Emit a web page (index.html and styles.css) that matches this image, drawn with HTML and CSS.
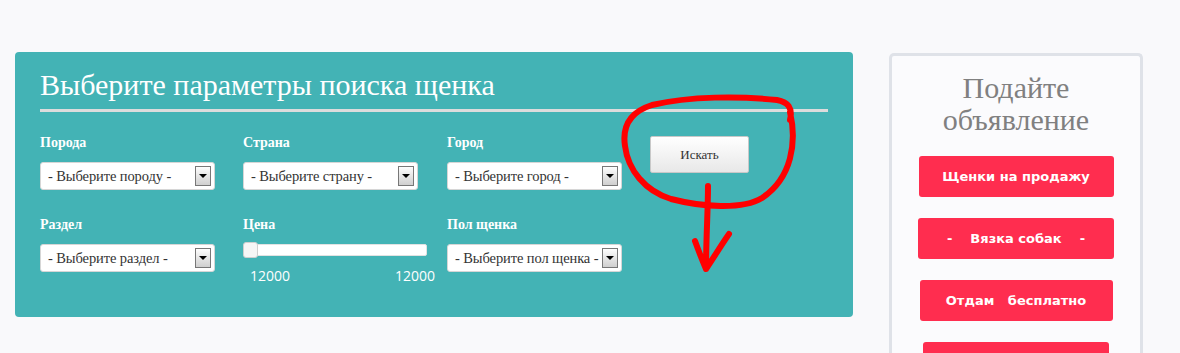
FILE: index.html
```html
<!DOCTYPE html>
<html lang="ru">
<head>
  <meta charset="UTF-8">
  <meta name="viewport" content="width=device-width, initial-scale=1.0">
  <title>Поиск щенка</title>
  <link rel="stylesheet" href="styles.css">
</head>
<body>

<div class="page">
  <div class="search-panel">
    <h1 class="search-title">Выберите параметры поиска щенка</h1>

    <div class="search-grid">
      <div class="field">
        <label>Порода</label>
        <div class="select"><span class="select-text">- Выберите породу -</span><span class="select-arrow"></span></div>
      </div>
      <div class="field">
        <label>Страна</label>
        <div class="select"><span class="select-text">- Выберите страну -</span><span class="select-arrow"></span></div>
      </div>
      <div class="field">
        <label>Город</label>
        <div class="select"><span class="select-text">- Выберите город -</span><span class="select-arrow"></span></div>
      </div>
      <div class="field">
        <button class="search-btn">Искать</button>
      </div>

      <div class="field">
        <label>Раздел</label>
        <div class="select"><span class="select-text">- Выберите раздел -</span><span class="select-arrow"></span></div>
      </div>
      <div class="field">
        <label>Цена</label>
        <div class="slider">
          <div class="slider-track"><div class="slider-handle"></div></div>
          <div class="slider-values"><span>12000</span><span>12000</span></div>
        </div>
      </div>
      <div class="field">
        <label>Пол щенка</label>
        <div class="select"><span class="select-text">- Выберите пол щенка -</span><span class="select-arrow"></span></div>
      </div>
    </div>
  </div>

  <aside class="sidebar">
    <h2 class="sidebar-title">Подайте объявление</h2>
    <div class="sidebar-links">
      <a class="ad-btn ad-sale" href="#">Щенки на продажу</a>
      <a class="ad-btn ad-mating" href="#">-    Вязка собак    -</a>
      <a class="ad-btn ad-free" href="#">Отдам   бесплатно</a>
      <a class="ad-btn ad-more" href="#"></a>
    </div>
  </aside>
</div>

<!-- hand-drawn marker over the search button -->
<svg class="scribble" width="1180" height="353" viewBox="0 0 1180 353">
  <path d="M790 112 C797 142 792 178 762 198 C742 210 702 207 671 199 C645 191 628 170 625 146 C622 126 630 112 652 105 C690 96 740 96 777 100 C788 102 793 108 790 120"
        fill="none" stroke="#ff0000" stroke-width="6" stroke-linecap="round" stroke-linejoin="round"/>
  <path d="M708 186 C708 210 706 240 706 269 M695 241 C699 252 703 262 706 269 C714 257 722 244 729 234"
        fill="none" stroke="#ff0000" stroke-width="6" stroke-linecap="round" stroke-linejoin="round"/>
</svg>

</body>
</html>
```

FILE: styles.css
```css
body {
  margin: 0;
  background: #f9f9fb;
  font-family: "Liberation Serif", "Times New Roman", serif;
  overflow: hidden;
}
.page {
  display: flex;
  align-items: flex-start;
  padding: 52px 0 0 15px;
}
.search-panel {
  width: 838px;
  box-sizing: border-box;
  padding: 16px 25px 32px 25px;
  background: #43b3b5;
  border-radius: 4px;
}
.search-title {
  margin: 0;
  padding: 0 0 7px 0;
  border-bottom: 3px solid #dcdcdc;
  font-size: 30px;
  font-weight: normal;
  line-height: 34px;
  color: #fff;
}
.search-grid {
  display: grid;
  grid-template-columns: 203px 204px 203px auto;
  row-gap: 27px;
  margin-top: 23px;
}
.field label {
  display: block;
  font-size: 14px;
  font-weight: bold;
  line-height: 16px;
  color: #fff;
  margin-bottom: 11px;
}
.select {
  display: flex;
  align-items: center;
  justify-content: space-between;
  width: 175px;
  height: 28px;
  box-sizing: border-box;
  padding: 0 3px 0 7px;
  background: #fff;
  border: 1px solid #d6d6d6;
  border-radius: 3px;
}
.select-text {
  font-size: 14.5px;
  letter-spacing: -0.1px;
  color: #333;
  white-space: nowrap;
}
.select-arrow {
  position: relative;
  flex-shrink: 0;
  width: 16px;
  height: 20px;
  box-sizing: border-box;
  border: 1px solid #777;
  background: linear-gradient(#fdfdfd, #cfcfcf);
}
.select-arrow::after {
  content: '';
  position: absolute;
  left: 3px;
  top: 7px;
  border-left: 4px solid transparent;
  border-right: 4px solid transparent;
  border-top: 4px solid #000;
}
.search-btn {
  display: block;
  width: 99px;
  height: 37px;
  margin-top: 1px;
  background: linear-gradient(#ffffff, #e8e8e8);
  border: 1px solid #c8c8c8;
  border-radius: 2px;
  font-family: "Liberation Serif", "Times New Roman", serif;
  font-size: 13px;
  color: #333;
}
.slider {
  width: 192px;
}
.slider-track {
  position: relative;
  width: 184px;
  height: 12px;
  box-sizing: border-box;
  margin-top: 2px;
  background: #fff;
  border: 1px solid #e2e2e2;
  border-radius: 2px;
}
.slider-handle {
  position: absolute;
  left: -1px;
  top: -3px;
  width: 15px;
  height: 16px;
  box-sizing: border-box;
  background: #f6f6f6;
  border: 1px solid #cfcfcf;
  border-radius: 3px;
}
.slider-values {
  display: flex;
  justify-content: space-between;
  margin-top: 10px;
  padding-left: 7px;
  font-family: "Open Sans", sans-serif;
  font-size: 14px;
  line-height: 19px;
  color: #fff;
}
.sidebar {
  width: 254px;
  height: 300px;
  box-sizing: border-box;
  margin: 1px 0 0 36px;
  padding-top: 16px;
  background: #fbfbfd;
  border: 3px solid #dfe2e8;
  border-bottom: 0;
  border-radius: 5px 5px 0 0;
}
.sidebar-title {
  margin: 0;
  font-size: 30px;
  font-weight: normal;
  line-height: 32px;
  text-align: center;
  color: #808080;
}
.sidebar-links {
  display: flex;
  flex-direction: column;
  align-items: center;
  gap: 21px;
  margin-top: 20px;
}
.ad-btn {
  display: flex;
  flex-shrink: 0;
  justify-content: center;
  align-items: center;
  height: 41px;
  background: #ff2d4f;
  border-radius: 3px;
  color: #fff;
  font-family: "DejaVu Sans", Verdana, sans-serif;
  font-size: 13px;
  font-weight: bold;
  text-decoration: none;
  white-space: pre;
}
.ad-sale { width: 195px; }
.ad-mating { width: 196px; }
.ad-free { width: 193px; }
.ad-more { width: 186px; }
.scribble {
  position: absolute;
  top: 0;
  left: 0;
  pointer-events: none;
}
```
